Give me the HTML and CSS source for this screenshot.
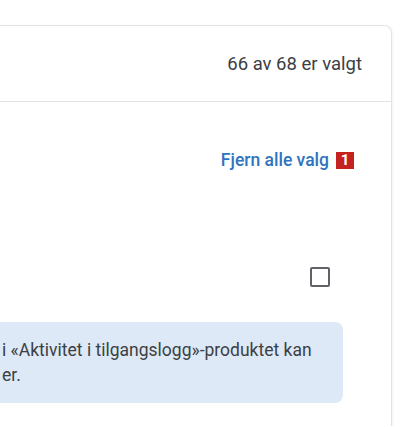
FILE: index.html
```html
<!DOCTYPE html>
<html lang="no">
<head>
    <meta charset="UTF-8">
    <meta name="viewport" content="width=device-width, initial-scale=1.0">
    <title>Tilgangslogg</title>
    <link rel="stylesheet" href="styles.css">
</head>
<body>

<div class="card">
    <div class="card-head">
        <span class="count">66 av 68 er valgt</span>
    </div>

    <div class="actions">
        <a class="clear-link" href="#">Fjern alle valg</a>
        <span class="badge">1</span>
    </div>

    <div class="check-row">
        <span class="checkbox"></span>
    </div>

    <div class="info">
        <p>i «Aktivitet i tilgangslogg»-produktet kan<br>er.</p>
    </div>
</div>

</body>
</html>
```

FILE: styles.css
```css
body {
    font-family: Roboto, "Liberation Sans", Arial, sans-serif;
    margin: 0;
    background-color: #fff;
    color: #3c4043;
}
.card {
    margin: 25px 24px 0 -40px;
    height: 401px;
    box-sizing: border-box;
    border: 1px solid #e3e3e3;
    border-bottom: none;
    border-radius: 8px 8px 0 0;
    box-shadow: 0 1px 3px rgba(60, 64, 67, 0.12);
}
.card-head {
    height: 75px;
    display: flex;
    align-items: center;
    justify-content: flex-end;
    padding-right: 29px;
    border-bottom: 1px solid #e3e3e3;
}
.count {
    font-size: 18.5px;
}
.actions {
    display: flex;
    align-items: center;
    justify-content: flex-end;
    gap: 7px;
    padding: 48px 37px 0 0;
}
.clear-link {
    color: #2f74c0;
    font-size: 17.5px;
    font-weight: 500;
    text-decoration: none;
}
.badge {
    width: 18px;
    height: 17px;
    background-color: #c5221f;
    color: #fff;
    font-size: 15px;
    font-weight: 700;
    display: flex;
    align-items: center;
    justify-content: center;
}
.check-row {
    display: flex;
    justify-content: flex-end;
    padding: 97px 61px 0 0;
}
.checkbox {
    width: 16px;
    height: 16px;
    border: 2px solid #5f6368;
    border-radius: 2px;
}
.info {
    margin: 35px 48px 0 0;
    height: 81px;
    padding-left: 41px;
    background-color: #dde9f7;
    border-radius: 8px;
    display: flex;
    align-items: center;
}
.info p {
    margin: 0;
    font-size: 17.5px;
    line-height: 25px;
}
```
